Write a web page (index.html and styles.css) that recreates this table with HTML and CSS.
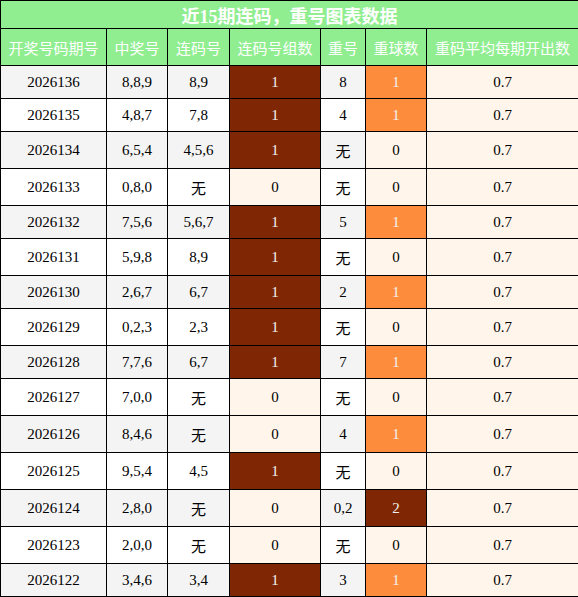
FILE: index.html
```html
<!DOCTYPE html>
<html lang="zh-CN">
<head>
    <meta charset="UTF-8">
    <meta name="viewport" content="width=device-width, initial-scale=1.0">
    <title>近15期连码，重号图表数据</title>
    <link rel="stylesheet" href="styles.css">
</head>
<body>
    <table class="stats">
        <colgroup>
            <col class="c-issue">
            <col class="c-draw">
            <col class="c-run">
            <col class="c-runs">
            <col class="c-rep">
            <col class="c-reps">
            <col class="c-avg">
        </colgroup>
        <thead>
            <tr>
                <th class="title" colspan="7">近15期连码，重号图表数据</th>
            </tr>
            <tr class="head">
                <th>开奖号码期号</th>
                <th>中奖号</th>
                <th>连码号</th>
                <th>连码号组数</th>
                <th>重号</th>
                <th>重球数</th>
                <th>重码平均每期开出数</th>
            </tr>
        </thead>
        <tbody>
            <tr><td>2026136</td><td>8,8,9</td><td>8,9</td><td class="hi">1</td><td>8</td><td class="mid">1</td><td class="lo">0.7</td></tr>
            <tr><td>2026135</td><td>4,8,7</td><td>7,8</td><td class="hi">1</td><td>4</td><td class="mid">1</td><td class="lo">0.7</td></tr>
            <tr><td>2026134</td><td>6,5,4</td><td>4,5,6</td><td class="hi">1</td><td>无</td><td class="lo">0</td><td class="lo">0.7</td></tr>
            <tr><td>2026133</td><td>0,8,0</td><td>无</td><td class="lo">0</td><td>无</td><td class="lo">0</td><td class="lo">0.7</td></tr>
            <tr><td>2026132</td><td>7,5,6</td><td>5,6,7</td><td class="hi">1</td><td>5</td><td class="mid">1</td><td class="lo">0.7</td></tr>
            <tr><td>2026131</td><td>5,9,8</td><td>8,9</td><td class="hi">1</td><td>无</td><td class="lo">0</td><td class="lo">0.7</td></tr>
            <tr><td>2026130</td><td>2,6,7</td><td>6,7</td><td class="hi">1</td><td>2</td><td class="mid">1</td><td class="lo">0.7</td></tr>
            <tr><td>2026129</td><td>0,2,3</td><td>2,3</td><td class="hi">1</td><td>无</td><td class="lo">0</td><td class="lo">0.7</td></tr>
            <tr><td>2026128</td><td>7,7,6</td><td>6,7</td><td class="hi">1</td><td>7</td><td class="mid">1</td><td class="lo">0.7</td></tr>
            <tr><td>2026127</td><td>7,0,0</td><td>无</td><td class="lo">0</td><td>无</td><td class="lo">0</td><td class="lo">0.7</td></tr>
            <tr><td>2026126</td><td>8,4,6</td><td>无</td><td class="lo">0</td><td>4</td><td class="mid">1</td><td class="lo">0.7</td></tr>
            <tr><td>2026125</td><td>9,5,4</td><td>4,5</td><td class="hi">1</td><td>无</td><td class="lo">0</td><td class="lo">0.7</td></tr>
            <tr><td>2026124</td><td>2,8,0</td><td>无</td><td class="lo">0</td><td>0,2</td><td class="hi">2</td><td class="lo">0.7</td></tr>
            <tr><td>2026123</td><td>2,0,0</td><td>无</td><td class="lo">0</td><td>无</td><td class="lo">0</td><td class="lo">0.7</td></tr>
            <tr><td>2026122</td><td>3,4,6</td><td>3,4</td><td class="hi">1</td><td>3</td><td class="mid">1</td><td class="lo">0.7</td></tr>
        </tbody>
    </table>
</body>
</html>
```

FILE: styles.css
```css
* {
    margin: 0;
    padding: 0;
    box-sizing: border-box;
}

body {
    font-family: "Liberation Serif", "Noto Sans CJK SC", serif;
    font-size: 15px;
    color: #000;
    background-color: #fff;
}

.stats {
    width: 578px;
    border-collapse: collapse;
    table-layout: fixed;
}

.c-issue { width: 106px; }
.c-draw { width: 61px; }
.c-run { width: 62px; }
.c-runs { width: 91px; }
.c-rep { width: 45px; }
.c-reps { width: 61px; }
.c-avg { width: 152px; }

th,
td {
    border: 1px solid #000;
    text-align: center;
    white-space: nowrap;
}

th {
    background-color: #90ee90;
    color: #fff;
    font-weight: normal;
}

.title {
    font-size: 18px;
    font-weight: bold;
    padding: 1px 0 0;
}

.head th {
    padding: 7.5px 0;
}

td {
    padding: 7.5px 0;
}

tbody tr:nth-child(odd) td {
    background-color: #f4f4f4;
}

tbody tr td.lo {
    background-color: #fff5eb;
    color: #000;
}

tbody tr td.mid {
    background-color: #fd8d3c;
    color: #f1f1f1;
}

tbody tr td.hi {
    background-color: #7f2704;
    color: #f1f1f1;
}
```
